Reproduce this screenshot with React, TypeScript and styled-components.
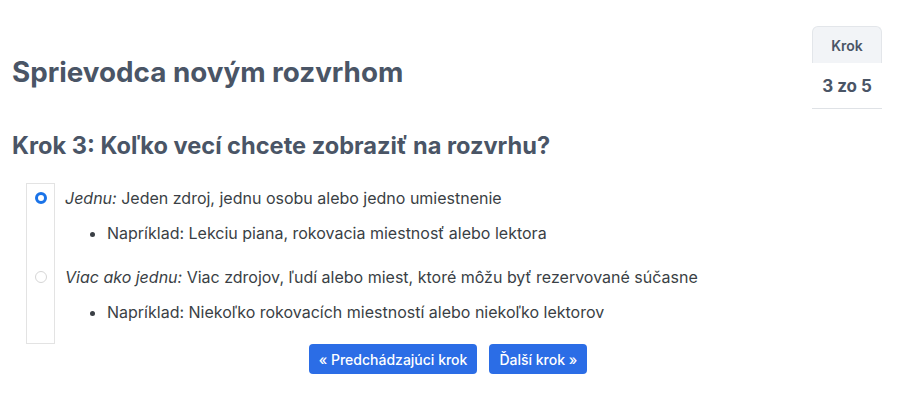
import React from "react";
import styled, { createGlobalStyle } from "styled-components";

const Global = createGlobalStyle`
  html, body { margin: 0; padding: 0; background: #fff; }
  body { font-family: Inter, "Noto Sans", sans-serif; color: #343a40; }
`;

const Page = styled.div`
  padding: 26px 18px 0 12px;
`;

const Header = styled.div`
  display: flex;
  justify-content: space-between;
  align-items: flex-start;
`;

const Title = styled.h1`
  margin: 29px 0 0;
  font-size: 27.8px;
  line-height: 34px;
  font-weight: 700;
  color: #4a5566;
`;

const StepBox = styled.div`
  width: 70px;
  display: flex;
  flex-direction: column;
  align-items: stretch;
`;

const StepTab = styled.div`
  height: 37px;
  box-sizing: border-box;
  border: 1px solid #e3e6ea;
  border-bottom: none;
  border-radius: 6px 6px 0 0;
  background: #f2f4f7;
  display: flex;
  align-items: center;
  justify-content: center;
  font-size: 14px;
  font-weight: 600;
  color: #4a5566;
`;

const StepValue = styled.div`
  height: 46px;
  box-sizing: border-box;
  border-bottom: 1px solid #dfe2e6;
  display: flex;
  align-items: center;
  justify-content: center;
  font-size: 17px;
  font-weight: 700;
  color: #4a5566;
`;

const Question = styled.h2`
  margin: 22px 0 0;
  font-size: 23.6px;
  line-height: 30px;
  font-weight: 700;
  color: #4a5566;
`;

const Options = styled.div`
  margin: 22px 0 0 14px;
  display: grid;
  grid-template-columns: 29px 1fr;
`;

const RadioCell = styled.div<{ $first?: boolean; $last?: boolean }>`
  border-left: 1px solid #e3e3e3;
  border-right: 1px solid #e3e3e3;
  border-top: ${(p) => (p.$first ? "1px solid #e3e3e3" : "none")};
  border-bottom: ${(p) => (p.$last ? "1px solid #e3e3e3" : "none")};
  box-sizing: border-box;
  padding-top: ${(p) => (p.$first ? "8px" : "9px")};
  display: flex;
  justify-content: center;
  align-items: flex-start;
`;

const Radio = styled.span<{ $checked?: boolean }>`
  width: 12px;
  height: 12px;
  border-radius: 50%;
  box-sizing: border-box;
  background: #fff;
  border: ${(p) => (p.$checked ? "3.5px solid #1a73e8" : "1px solid #d6d6d6")};
`;

const OptionBody = styled.div<{ $last?: boolean }>`
  padding: 3px 0 ${(p) => (p.$last ? "20px" : "17px")} 10px;
`;

const Label = styled.div`
  font-size: 16px;
  line-height: 24px;
  color: #3a3f45;
  em { font-style: italic; }
`;

const Examples = styled.ul`
  margin: 11px 0 0;
  padding-left: 42px;
  list-style: disc;
  li {
    font-size: 16px;
    line-height: 24px;
    color: #3a3f45;
  }
`;

const Actions = styled.div`
  display: flex;
  justify-content: center;
  gap: 12px;
  padding-left: 2px;
`;

const Button = styled.button`
  height: 30px;
  padding: 0 10px;
  border: none;
  border-radius: 4px;
  background: #2b6de6;
  color: #fff;
  font-family: Inter, "Noto Sans", sans-serif;
  font-size: 14px;
  font-weight: 500;
  cursor: pointer;
`;

export default function App() {
  return (
    <>
      <Global />
      <Page>
        <Header>
          <Title>Sprievodca novým rozvrhom</Title>
          <StepBox>
            <StepTab>Krok</StepTab>
            <StepValue>3 zo 5</StepValue>
          </StepBox>
        </Header>
        <Question>Krok 3: Koľko vecí chcete zobraziť na rozvrhu?</Question>
        <Options>
          <RadioCell $first>
            <Radio $checked />
          </RadioCell>
          <OptionBody>
            <Label>
              <em>Jednu:</em> Jeden zdroj, jednu osobu alebo jedno umiestnenie
            </Label>
            <Examples>
              <li>Napríklad: Lekciu piana, rokovacia miestnosť alebo lektora</li>
            </Examples>
          </OptionBody>
          <RadioCell $last>
            <Radio />
          </RadioCell>
          <OptionBody $last>
            <Label>
              <em>Viac ako jednu:</em> Viac zdrojov, ľudí alebo miest, ktoré môžu byť rezervované súčasne
            </Label>
            <Examples>
              <li>Napríklad: Niekoľko rokovacích miestností alebo niekoľko lektorov</li>
            </Examples>
          </OptionBody>
        </Options>
        <Actions>
          <Button>« Predchádzajúci krok</Button>
          <Button>Ďalší krok »</Button>
        </Actions>
      </Page>
    </>
  );
}
